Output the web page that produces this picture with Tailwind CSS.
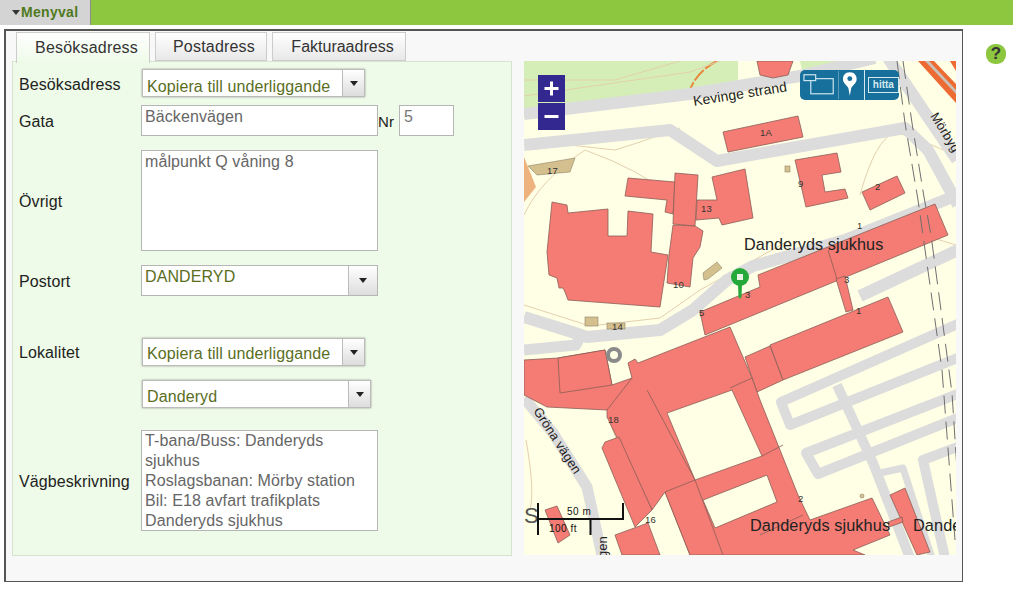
<!DOCTYPE html>
<html lang="sv">
<head>
<meta charset="UTF-8" />
<title>Besöksadress</title>
<script src="https://cdn.jsdelivr.net/npm/@tailwindcss/browser@4"></script>
</head>
<body class="h-[593px] w-[1013px] overflow-hidden bg-white font-['Liberation_Sans',Arial,sans-serif] text-[16px] tracking-[0.1px] text-[#222]">

<!-- Menu bar -->
<div class="flex h-[25px] bg-[#8dc63f]">
  <div class="flex w-[91px] items-center border-r border-[#8a8a8a] bg-[#d4d4d4] pl-[12px] text-[14px] font-bold tracking-[0.3px] text-[#4f7a1c]">
    <span class="mr-[1px] h-0 w-0 border-x-[4px] border-t-[5px] border-x-transparent border-t-[#333]"></span>Menyval
  </div>
</div>

<div class="flex items-start">
  <!-- Main panel -->
  <div class="ml-[4px] mt-[4px] h-[553px] w-[959px] border border-t-2 border-l-2 border-[#555] bg-[#f8f8f8] pl-[6px]">
    <!-- Tabs -->
    <div class="ml-[4px] flex h-[30px] items-stretch gap-[5px] pt-[1px] tracking-[0.2px] text-[#333]">
      <div class="z-10 flex h-[31px] w-[134px] items-center justify-center border border-b-0 border-[#ccc] bg-gradient-to-b from-white to-[#eefbe8] pl-[7px]">Besöksadress</div>
      <div class="flex w-[112px] items-center justify-center border border-[#ccc] bg-gradient-to-b from-white to-[#e8e8e8] pl-[6px]">Postadress</div>
      <div class="flex w-[134px] items-center justify-center border border-[#ccc] bg-gradient-to-b from-white to-[#e8e8e8] pl-[7px] tracking-normal">Fakturaadress</div>
    </div>

    <div class="flex items-start">
      <!-- Form -->
      <div class="h-[495px] w-[500px] border border-[#d5e5cd] bg-[#eefbe8] pl-[6px]">
        <div class="mt-[7px] flex h-[28px] items-center">
          <div class="w-[123px] pt-[3px]">Besöksadress</div>
          <div class="flex h-[28px] w-[223px] border border-[#bbb] bg-white text-[#5a6e1e] shadow-[0_0_2px_#999]">
            <span class="flex-1 pl-[4px] pt-[5px]">Kopiera till underliggande</span>
            <span class="flex w-[22px] items-center justify-center border-l border-[#bbb] bg-gradient-to-b from-white to-[#ddd]"><span class="h-0 w-0 border-x-[4px] border-t-[5px] border-x-transparent border-t-[#222]"></span></span>
          </div>
        </div>
        <div class="mt-[8px] flex h-[31px] items-start">
          <div class="w-[122px] pt-[5px]">Gata</div>
          <div class="h-[31px] w-[237px] border border-[#b5b5b5] bg-white pl-[3px] leading-[22px] text-[#666]">Bäckenvägen</div>
          <div class="w-[21px] pt-[6px] text-[15px]">Nr</div>
          <div class="h-[31px] w-[55px] border border-[#b5b5b5] bg-white pl-[4px] leading-[22px] text-[#777]">5</div>
        </div>
        <div class="mt-[14px] flex h-[101px] items-center">
          <div class="w-[122px] pt-[2px]">Övrigt</div>
          <div class="h-[101px] w-[237px] border border-[#b5b5b5] bg-white pl-[3px] leading-[22px] text-[#666]">målpunkt Q våning 8</div>
        </div>
        <div class="mt-[14px] flex h-[31px] items-center">
          <div class="w-[122px] pt-[2px]">Postort</div>
          <div class="flex h-[31px] w-[237px] border border-[#b5b5b5] bg-white leading-[22px] text-[#5a6e1e]">
            <span class="flex-1 pl-[3px]">DANDERYD</span>
            <span class="flex w-[29px] items-center justify-center border-l border-[#bbb] bg-gradient-to-b from-white to-[#ddd]"><span class="h-0 w-0 border-x-[4px] border-t-[5px] border-x-transparent border-t-[#222]"></span></span>
          </div>
        </div>
        <div class="mt-[42px] flex h-[28px] items-center">
          <div class="w-[123px] pt-[2px]">Lokalitet</div>
          <div class="flex h-[28px] w-[223px] border border-[#bbb] bg-white text-[#5a6e1e] shadow-[0_0_2px_#999]">
            <span class="flex-1 pl-[4px] pt-[3px]">Kopiera till underliggande</span>
            <span class="flex w-[22px] items-center justify-center border-l border-[#bbb] bg-gradient-to-b from-white to-[#ddd]"><span class="h-0 w-0 border-x-[4px] border-t-[5px] border-x-transparent border-t-[#222]"></span></span>
          </div>
        </div>
        <div class="mt-[14px] flex h-[28px] pl-[123px]">
          <div class="flex h-[28px] w-[229px] border border-[#bbb] bg-white text-[#5a6e1e] shadow-[0_0_2px_#999]">
            <span class="flex-1 pl-[4px] pt-[4px]">Danderyd</span>
            <span class="flex w-[22px] items-center justify-center border-l border-[#bbb] bg-gradient-to-b from-white to-[#ddd]"><span class="h-0 w-0 border-x-[4px] border-t-[5px] border-x-transparent border-t-[#222]"></span></span>
          </div>
        </div>
        <div class="mt-[22px] flex h-[101px] items-center">
          <div class="w-[122px] pt-[2px]">Vägbeskrivning</div>
          <div class="h-[101px] w-[237px] border border-[#b5b5b5] bg-white pl-[3px] leading-[20px] text-[#666]">T-bana/Buss: Danderyds sjukhus<br />Roslagsbanan: Mörby station<br />Bil: E18 avfart trafikplats Danderyds sjukhus</div>
        </div>
      </div>

      <!-- Map -->
      <div class="relative ml-[12px] h-[494px] w-[432px] overflow-hidden">
        <svg class="block" width="432" height="494" viewBox="524 61 432 494" font-family="Liberation Sans, Arial, sans-serif">
          <rect x="524" y="61" width="432" height="494" fill="#ffffe6" />
          <!-- green and landuse -->
          <polygon points="524,61 738,61 738,90 650,95 524,118" fill="#d5eeb7" />
          <polygon points="800,61 853,61 802,70" fill="#d5eeb7" />
          <polygon points="524,157 536,187 524,202" fill="#eeb27f" />
          <path d="M717,61 Q695,72 688,95" fill="none" stroke="#e8863c" stroke-width="2" stroke-dasharray="14 2" />
          <!-- footpaths -->
          <g fill="none" stroke="#e3cfae" stroke-width="1">
            <path d="M524,140 L615,150 L640,142 L680,128" />
            <path d="M524,80 L615,80 L680,61" />
            <path d="M524,96 L690,72 L720,61" />
            <path d="M524,215 Q540,180 585,150 Q640,170 670,195" />
            <path d="M524,305 L590,326 L660,318 L700,290 L790,240" />
            <path d="M860,195 Q875,140 895,132 L925,142 L955,155" />
            <path d="M526,440 Q535,490 530,510" />
            <path d="M610,423 L640,500" />
            <path d="M900,228 L956,245" />
          </g>
          <!-- roads -->
          <g fill="none" stroke="#dcdcdc" stroke-linejoin="round">
            <polyline points="524,114 690,94 800,76 875,58" stroke-width="12" />
            <polyline points="524,145 670,130 717,161 905,128 928,150 958,205" stroke-width="12" />
            <polyline points="888,58 957,160" stroke-width="12" />
            <polyline points="958,250 860,296" stroke-width="12" />
            <polyline points="950,198 845,240 753,266 727,280 693,310 660,330 587,337 572,332 524,317" stroke-width="12" />
            <polyline points="580,337 576,345 524,350" stroke-width="11" />
            <polyline points="524,398 553,433 587,487 603,560" stroke-width="11" />
            <polyline points="960,323 781,402 790,425 960,357" stroke-width="10" />
            <polyline points="960,393 806,453 818,474 960,417" stroke-width="10" />
            <polyline points="837,385 873,463 910,558" stroke-width="10" />
            <polyline points="960,446 923,460 945,558" stroke-width="10" />
            <polyline points="880,473 903,468 932,558" stroke-width="7" />
          </g>
          <!-- buildings -->
          <g fill="#f47c74" stroke="#8a5e56" stroke-width="0.8" stroke-linejoin="round">
            <polygon points="757,61 793,61 788,75 773,78 760,75" />
            <polygon points="723,132 798,116 803,137 728,152" />
            <polygon points="795,160 837,153 841,172 822,175 825,192 845,189 848,198 806,207" />
            <polygon points="862,192 897,176 905,193 870,210" />
            <polygon points="628,178 675,182 673,214 665,212 667,200 625,196" />
            <polygon points="675,173 698,175 695,226 673,224" />
            <polygon points="712,177 745,169 753,218 722,225 719,218 696,220 697,200 717,200" />
            <polygon points="552,202 567,205 568,213 608,209 608,236 627,236 628,211 653,214 651,252 668,255 660,307 568,300 565,292 563,288 559,288 557,278 549,275 547,252" />
            <polygon points="673,225 695,226 703,231 700,247 693,258 690,287 667,283 669,255" />
            <polygon points="700,312 760,287 758,275 935,204 948,235 705,335" />
            <polygon points="836,279 845,276 853,310 846,312" />
            <polygon points="745,357 770,346 783,380 757,392" />
            <polygon points="770,345 888,297 903,332 783,380" />
            <polygon points="524,360 558,358 605,350 612,385 632,378 650,400 647,410 607,410 547,407 524,395" />
            <polygon points="558,358 605,350 612,385 560,393" />
            <polygon points="628,363 635,359 638,363 730,327 752,378 760,400 798,495 810,520 872,498 890,535 853,550 865,555 690,555 665,492 652,510 607,417 607,410 632,378" />
            <polygon points="602,448 605,442 619,437 652,510 635,527" />
            <polygon points="615,535 648,523 660,555 622,555" />
            <polygon points="665,492 695,480 723,555 690,555" />
            <polygon points="890,495 905,488 930,552 917,555" />
            <polygon points="888,522 902,517 903,522 889,527" />
            <polygon points="545,510 557,506 570,535 558,543" />
            <polygon points="667,413 732,390 762,456 695,480" fill="#ffffe6" />
            <polygon points="703,500 767,475 777,502 715,528" fill="#ffffe6" />
            <path d="M647,390 L695,480 M730,388 L752,378 M762,456 L783,445 M760,535 L803,515 M828,250 L837,279" fill="none" />
          </g>
          <g fill="#d4bf8e" stroke="#8f8468" stroke-width="0.6">
            <polygon points="528,166 575,158 570,172 537,175" />
            <rect x="585" y="317" width="13" height="9" />
            <rect x="607" y="323" width="18" height="6" />
            <polygon points="703,273 717,262 722,268 708,279 704,280" />
            <rect x="785" y="166" width="5" height="6" />
            <circle cx="862" cy="496" r="2" />
          </g>
          <!-- railway -->
          <g fill="none" stroke="#6f6f6f" stroke-width="1" stroke-dasharray="18 8">
            <polyline points="897,61 905,123 918,200 942,370 955,540" />
            <polyline points="903,61 912,123 924,197 931,235 952,393 957,470" />
          </g>
          <!-- stripes -->
          <polygon points="918,61 934,61 956,84 956,103" fill="#ee6a33" />
          <polygon points="925,61 929,61 956,90 956,94" fill="#c9c0b8" />
          <polygon points="950,61 956,61 956,71" fill="#ee6a33" />
          <!-- ring and pin -->
          <circle cx="614" cy="355" r="6" fill="none" stroke="#8a8a8a" stroke-width="4" />
          <circle cx="740" cy="277" r="9" fill="#25a93a" />
          <path d="M738,284 H742 L741.500,297 L740,299 L738.500,297 Z" fill="#25a93a" />
          <rect x="737" y="274" width="6" height="6" fill="#e9f4e4" />
          <!-- labels -->
          <g fill="#222">
            <text x="694" y="106" font-size="14" transform="rotate(-9 694 106)">Kevinge strand</text>
            <text x="744" y="250" font-size="16.200">Danderyds sjukhus</text>
            <text x="750" y="531" font-size="16.300">Danderyds sjukhus</text>
            <text x="913" y="531" font-size="16.300">Dande</text>
            <text x="930" y="116" font-size="13" transform="rotate(58 930 116)">Mörbyg</text>
            <text x="533" y="411" font-size="13" transform="rotate(57 533 411)">Gröna vägen</text>
            <text x="607" y="572" font-size="13" transform="rotate(-90 607 572)">vägen</text>
            <text x="524" y="523" font-size="22" fill="#555">S</text>
          </g>
          <g fill="#333" font-size="9.500">
            <text x="760" y="136">1A</text>
            <text x="547" y="174">17</text>
            <text x="798" y="187">9</text>
            <text x="875" y="190">2</text>
            <text x="701" y="212">13</text>
            <text x="673" y="288">10</text>
            <text x="745" y="298">3</text>
            <text x="699" y="316">5</text>
            <text x="844" y="283">3</text>
            <text x="857" y="229">1</text>
            <text x="856" y="314">1</text>
            <text x="612" y="330">14</text>
            <text x="608" y="423">18</text>
            <text x="645" y="523">16</text>
            <text x="798" y="502">2</text>
          </g>
          <!-- scale bar -->
          <g stroke="#111" stroke-width="2" fill="none">
            <path d="M538,503 V535 M538,519 H623 V503 M590.500,519 V535" />
          </g>
          <text x="567" y="515" font-size="10" fill="#111" letter-spacing="0.5">50 m</text>
          <text x="549" y="532" font-size="10" fill="#111" letter-spacing="0.5">100 ft</text>
        </svg>

        <!-- Zoom buttons -->
        <div class="absolute left-[14px] top-[14px] flex w-[27px] flex-col gap-[1px]">
          <div class="flex h-[27px] items-center justify-center bg-[#32288f]">
            <svg width="17" height="17" viewBox="0 0 17 17"><path d="M8.5 1.5V15.5M1.5 8.5H15.5" stroke="#fff" stroke-width="3" /></svg>
          </div>
          <div class="flex h-[27px] items-center justify-center bg-[#32288f]">
            <svg width="17" height="17" viewBox="0 0 17 17"><path d="M1.5 8.5H15.5" stroke="#fff" stroke-width="3" /></svg>
          </div>
        </div>

        <!-- Tool control -->
        <div class="absolute left-[276px] top-[9px] flex h-[30px] w-[99px] items-center rounded-[5px] bg-[#16709b] tracking-normal">
          <svg class="ml-[2px]" width="34" height="26" viewBox="0 0 34 26" fill="none" stroke="#cfe6f0" stroke-width="1.2">
            <rect x="9" y="6.5" width="23" height="15.5" />
            <rect x="2" y="2.5" width="12" height="6" fill="#16709b" />
          </svg>
          <span class="ml-[3px] h-[28px] w-px bg-[#5a9dbb]"></span>
          <svg class="ml-[3px]" width="16" height="28" viewBox="0 0 16 28">
            <path d="M8 1 C3 1 1 4.500 1 8 C1 12 5 14 6.500 17 L8 25 L9.500 17 C11 14 15 12 15 8 C15 4.500 13 1 8 1 Z" fill="#fff" />
            <circle cx="8" cy="7.500" r="2.500" fill="#16709b" />
          </svg>
          <span class="ml-[6px] h-[30px] w-px bg-[#d5e8f0]"></span>
          <span class="ml-[3px] flex h-[16px] w-[32px] items-center justify-center border border-[#d5e8f0] text-[10px] font-bold leading-none text-[#d5e8f0]">hitta</span>
        </div>
      </div>
    </div>
  </div>

  <!-- Help -->
  <div class="ml-[23px] mt-[19px] flex h-[20px] w-[20px] items-center justify-center rounded-[9px] bg-[#8dc63f] text-[17px] font-bold text-[#333]">?</div>
</div>
</body>
</html>
